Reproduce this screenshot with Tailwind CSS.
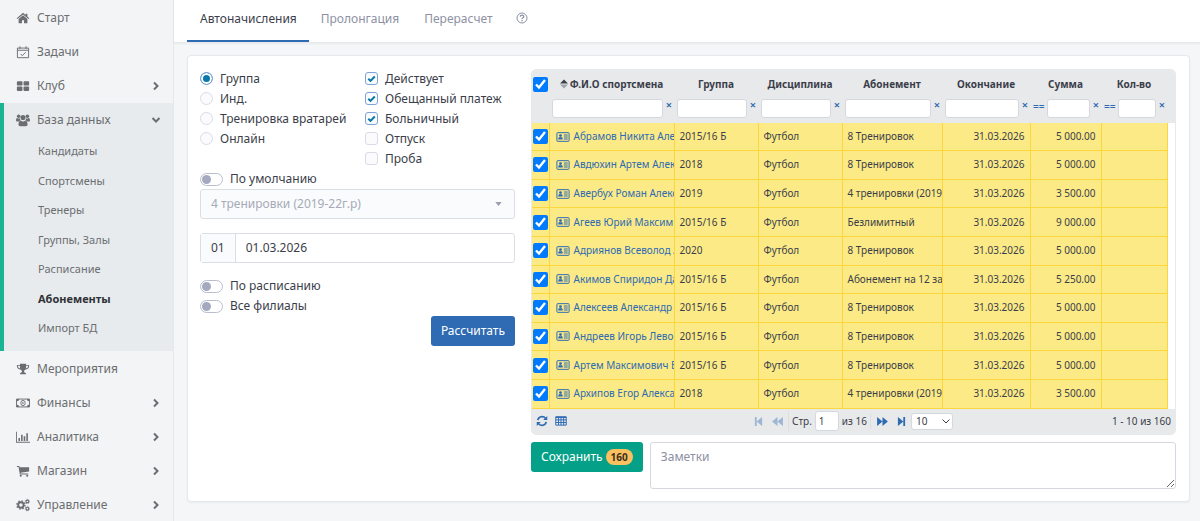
<!DOCTYPE html>
<html lang="ru">
<head>
  <meta charset="UTF-8" />
  <meta name="viewport" content="width=device-width, initial-scale=1.0" />
  <title>Абонементы — Автоначисления</title>
  <script src="https://cdn.jsdelivr.net/npm/@tailwindcss/browser@4"></script>
</head>
<body class="flex min-h-screen bg-[#f5f6f8] font-['Noto_Sans','Open_Sans',sans-serif] text-[12px] text-[#3b3e4a]">

  <!-- Иконки -->
  <svg class="hidden">
    <symbol id="i-home" viewBox="0 0 16 16"><path d="M8 2 .8 8.2l.9 1L8 3.900l6.300 5.300.9-1L13 6.200V3h-2v1.500z"/><path d="M8 4.900 3 9.100V14h3.800v-3.500h2.400V14H13V9.100z"/></symbol>
    <symbol id="i-task" viewBox="0 0 16 16"><path fill="none" stroke="currentColor" stroke-width="1.100" d="M1.600 3.500h12.800v11H1.600zM1.600 6h12.800M4.500 1.500v3M11.500 1.500v3M5.200 10.200l2 2 3.800-3.900"/></symbol>
    <symbol id="i-grid" viewBox="0 0 16 16"><rect x="1" y="2.500" width="6.400" height="5" rx="1"/><rect x="8.600" y="2.500" width="6.400" height="5" rx="1"/><rect x="1" y="8.700" width="6.400" height="5" rx="1"/><rect x="8.600" y="8.700" width="6.400" height="5" rx="1"/></symbol>
    <symbol id="i-users" viewBox="0 0 16 16"><circle cx="3" cy="3.600" r="2"/><circle cx="13" cy="3.600" r="2"/><circle cx="8" cy="5.200" r="2.900"/><path d="M0 8.500C0 6.500.6 5.600 1.500 5.600c1 .7 2 .7 2.900.3 0 1.200.4 2 1 2.700-1 .1-1.700.5-2.200 1.200H1.400C.5 9.800 0 9.400 0 8.500zM16 8.500c0-2-.6-2.900-1.500-2.900-1 .7-2 .7-2.900.3 0 1.200-.4 2-1 2.700 1 .1 1.700.5 2.200 1.200h1.800c.9 0 1.400-.4 1.400-1.300zM2.800 13.200c0-2.700.9-4.300 2.600-4.300 1.600 1.200 3.600 1.200 5.200 0 1.700 0 2.600 1.600 2.600 4.300 0 1.200-.8 1.800-1.900 1.800H4.700c-1.100 0-1.900-.6-1.900-1.800z"/></symbol>
    <symbol id="i-cup" viewBox="0 0 16 16"><path fill-rule="evenodd" d="M4.500 2h7v1.300H15v1.500c0 2-1.800 3.500-4.200 3.800-.5.700-1.600 1.200-1.600 2.200 0 .8.500 1.200 1.400 1.400.6.200.9.600.9 1.300v.5h-7v-.5c0-.7.3-1.100.9-1.300.9-.2 1.400-.6 1.400-1.400 0-1-1.100-1.500-1.600-2.200C2.800 8.300 1 6.800 1 4.800V3.300h3.500zM2 4.300c0 1.500 1 2.600 2.800 3.100-.3-.9-.4-2-.4-3.100zm12 0h-2.400c0 1.100-.1 2.200-.4 3.100C13 6.900 14 5.800 14 4.300z"/></symbol>
    <symbol id="i-money" viewBox="0 0 16 16"><path fill="none" stroke="currentColor" stroke-width="1.100" d="M.6 3.500h14.800v9H.6z"/><path d="M1 3.500h2.600A2.500 2.500 0 0 1 1 6zM15 3.500h-2.600A2.500 2.500 0 0 0 15 6zM1 12.500h2.600A2.500 2.500 0 0 0 1 10zM15 12.500h-2.600A2.500 2.500 0 0 1 15 10z"/><ellipse cx="8" cy="8" rx="2.500" ry="3.100" fill="none" stroke="currentColor"/><path d="M7.300 6.500h1.200v3h-1.200z"/></symbol>
    <symbol id="i-chart" viewBox="0 0 16 16"><path d="M0 2h1v11.500h15v1H0zM2.800 9h1.800v3.700H2.800zM5.800 5.500h1.800v7.200H5.800zM8.800 7.200h1.800v5.500H8.800zM11.800 3.600h1.800v9.100h-1.800z"/></symbol>
    <symbol id="i-cart" viewBox="0 0 16 16"><path d="M1 2.300h2.800l.3 1.300H15v5L5.200 9.900l.2.900H14v1.200H4.400L2.900 3.500H1z"/><circle cx="5.400" cy="13.500" r="1.200"/><circle cx="12.800" cy="13.500" r="1.200"/></symbol>
    <symbol id="i-cogs" viewBox="0 0 16 16"><circle cx="5.600" cy="8" r="3.100" fill="none" stroke="currentColor" stroke-width="2.200"/><circle cx="5.600" cy="8" r="4.700" fill="none" stroke="currentColor" stroke-width="1.500" stroke-dasharray="1.850 1.850"/><circle cx="13" cy="4" r="1.600" fill="none" stroke="currentColor" stroke-width="1.300"/><circle cx="13" cy="4" r="2.500" fill="none" stroke="currentColor" stroke-width=".8" stroke-dasharray="1 1"/><circle cx="13" cy="12.200" r="1.600" fill="none" stroke="currentColor" stroke-width="1.300"/><circle cx="13" cy="12.200" r="2.500" fill="none" stroke="currentColor" stroke-width=".8" stroke-dasharray="1 1"/></symbol>
    <symbol id="i-right" viewBox="0 0 10 10"><path fill="none" stroke="currentColor" stroke-width="2" d="m3 1.500 3.500 3.500L3 8.500"/></symbol>
    <symbol id="i-down" viewBox="0 0 10 10"><path fill="none" stroke="currentColor" stroke-width="2" d="M1.500 3 5 6.500 8.500 3"/></symbol>
    <symbol id="i-card" viewBox="0 0 16 12"><path fill="none" stroke="currentColor" stroke-width="1.200" d="M1.600.8h12.800q.9 0 .9.900v8.600q0 .9-.9.900H1.600q-.9 0-.9-.9V1.700q0-.9.900-.9z"/><circle cx="5" cy="4.300" r="1.700"/><path d="M2.300 8.900c0-2 .6-3 1.500-3 .8.500 1.600.5 2.400 0 .9 0 1.500 1 1.500 3zM9 3h4.700v1.100H9zM9 5.400h4.700v1.100H9zM9 7.800h4.700v1.100H9z"/></symbol>
    <symbol id="i-refresh" viewBox="0 0 16 16"><path fill="none" stroke="currentColor" stroke-width="2.200" d="M2.300 6.800A5.900 5.900 0 0 1 12.800 4.500M13.700 9.200A5.900 5.900 0 0 1 3.200 11.500"/><path d="M15 1.300v5.400H9.600zM1 14.700V9.300h5.400z"/></symbol>
    <symbol id="i-table" viewBox="0 0 16 16"><path fill="none" stroke="currentColor" stroke-width="1.300" d="M1 2.500h14v11H1zM1 6.500h14M1 10h14M4.700 3v10.500M8 3v10.500M11.500 3v10.500"/><path d="M1 2h14v2H1z"/></symbol>
    <symbol id="i-last" viewBox="0 0 10 10"><path d="M1 0l6 5-6 5zM7 0h2v10H7z"/></symbol>
    <symbol id="i-next" viewBox="0 0 12 10"><path d="M0 0l6 5-6 5zM6 0l6 5-6 5z"/></symbol>
  </svg>

  <!-- Боковое меню -->
  <nav class="w-[174px] shrink-0 border-r border-[#e6e8ec] bg-[#f3f4f6] pt-px text-[12px] text-[#6b6e70]">
    <a href="#" class="flex h-[34px] items-center gap-[7px] pr-3 pl-4"><svg class="size-[14px] fill-current"><use href="#i-home" /></svg>Старт</a>
    <a href="#" class="flex h-[34px] items-center gap-[7px] pr-3 pl-4"><svg class="size-[14px] fill-current"><use href="#i-task" /></svg>Задачи</a>
    <a href="#" class="flex h-[34px] items-center gap-[7px] pr-3 pl-4"><svg class="size-[14px] fill-current"><use href="#i-grid" /></svg>Клуб<svg class="ml-auto size-[10px]"><use href="#i-right" /></svg></a>

    <div class="mb-px border-l-4 border-[#1ab394] bg-[#e8ebee] pb-2">
      <a href="#" class="flex h-[34px] items-center gap-[7px] pr-3 pl-3"><svg class="size-[14px] fill-current"><use href="#i-users" /></svg>База данных<svg class="ml-auto size-[10px]"><use href="#i-down" /></svg></a>
      <div class="grid h-[206px] items-center pl-[34px] text-[11px]">
        <a href="#">Кандидаты</a>
        <a href="#">Спортсмены</a>
        <a href="#">Тренеры</a>
        <a href="#">Группы, Залы</a>
        <a href="#">Расписание</a>
        <a href="#" class="font-bold text-[#2f3236]">Абонементы</a>
        <a href="#">Импорт БД</a>
      </div>
    </div>

    <a href="#" class="flex h-[34px] items-center gap-[7px] pr-3 pl-4"><svg class="size-[14px] fill-current"><use href="#i-cup" /></svg>Мероприятия</a>
    <a href="#" class="flex h-[34px] items-center gap-[7px] pr-3 pl-4"><svg class="size-[14px] fill-current"><use href="#i-money" /></svg>Финансы<svg class="ml-auto size-[10px]"><use href="#i-right" /></svg></a>
    <a href="#" class="flex h-[34px] items-center gap-[7px] pr-3 pl-4"><svg class="size-[14px] fill-current"><use href="#i-chart" /></svg>Аналитика<svg class="ml-auto size-[10px]"><use href="#i-right" /></svg></a>
    <a href="#" class="flex h-[34px] items-center gap-[7px] pr-3 pl-4"><svg class="size-[14px] fill-current"><use href="#i-cart" /></svg>Магазин<svg class="ml-auto size-[10px]"><use href="#i-right" /></svg></a>
    <a href="#" class="flex h-[34px] items-center gap-[7px] pr-3 pl-4"><svg class="size-[14px] fill-current"><use href="#i-cogs" /></svg>Управление<svg class="ml-auto size-[10px]"><use href="#i-right" /></svg></a>
  </nav>

  <main class="min-w-0 flex-1">
    <!-- Вкладки -->
    <div class="flex border-b border-[#e6e8ec] bg-white pl-[13px] text-[12px] text-[#8d91a3] shadow-xs">
      <a href="#" class="border-b-2 border-[#2f6bb3] px-3 pt-[9px] pb-[11px] pl-[13px] leading-5 text-[#3b3e4a]">Автоначисления</a>
      <a href="#" class="px-3 pt-[9px] pb-[11px] leading-5">Пролонгация</a>
      <a href="#" class="px-[13px] pt-[9px] pb-[11px] leading-5">Перерасчет</a>
      <a href="#" class="px-[10px] pt-[9px] pb-[11px] leading-5" aria-label="Справка">
        <svg viewBox="0 0 12 12" class="mt-[3px] size-3" fill="none" stroke="currentColor"><circle cx="6" cy="6" r="5" /><path stroke-width="1.3" d="M4.300 4.800c0-2.200 3.500-2.100 3.500-.2C7.800 5.800 6 5.800 6 7.100M6 8v1.200" /></svg>
      </a>
    </div>

    <div class="mt-3 mr-[10px] ml-[13px] grid grid-cols-[315px_1fr] gap-4 rounded border border-[#e6e8ec] bg-white p-3 pr-[13px] shadow-xs">

      <!-- Параметры расчета -->
      <form class="pt-px text-[12px] leading-5">
        <div class="grid grid-cols-[149px_1fr] gap-x-4">
          <div id="types"></div>
          <div id="statuses"></div>
        </div>

        <label class="flex items-center gap-[7px]">
          <input type="checkbox" class="sr-only" />
          <span class="flex h-[13px] w-[23px] rounded-full border border-[#b9bdd0] p-px"><span class="size-[9px] rounded-full bg-[#a5a9c0]"></span></span>
          По умолчанию
        </label>

        <div class="grid items-center">
          <select disabled aria-label="Абонемент" class="col-start-1 row-start-1 h-[30px] appearance-none rounded-[3px] border border-[#dcdee6] bg-[#fafbfc] px-[10px] text-[#a6aab8]">
            <option>4 тренировки (2019-22г.р)</option>
          </select>
          <svg viewBox="0 0 8 5" class="col-start-1 row-start-1 mr-[13px] h-1 w-[7px] justify-self-end fill-[#9a9eb0]"><path d="M0 0h8L4 5z" /></svg>
        </div>

        <div class="mt-[14px] flex h-[30px] rounded-[3px] border border-[#dcdee6]">
          <label for="date" class="flex items-center border-r border-[#dcdee6] bg-[#fafbfc] px-[10px]">01</label>
          <input id="date" value="01.03.2026" class="min-w-0 flex-1 px-[10px]" />
        </div>

        <label class="mt-[13px] flex items-center gap-[7px]">
          <input type="checkbox" class="sr-only" />
          <span class="flex h-[13px] w-[23px] rounded-full border border-[#b9bdd0] p-px"><span class="size-[9px] rounded-full bg-[#a5a9c0]"></span></span>
          По расписанию
        </label>
        <label class="flex items-center gap-[7px]">
          <input type="checkbox" class="sr-only" />
          <span class="flex h-[13px] w-[23px] rounded-full border border-[#b9bdd0] p-px"><span class="size-[9px] rounded-full bg-[#a5a9c0]"></span></span>
          Все филиалы
        </label>
        <button type="button" class="ml-auto block h-[30px] rounded-[3px] bg-[#2f6bb3] px-[10px] text-white">Рассчитать</button>
      </form>

      <div class="min-w-0">
        <!-- Таблица -->
        <div class="mt-px overflow-hidden rounded-[5px] border border-[#e7e9ea]">
          <table class="w-full table-fixed border-collapse text-[10px]">
            <colgroup>
              <col class="w-[17px]" />
              <col class="w-[125px]" />
              <col class="w-[84px]" />
              <col class="w-[84px]" />
              <col class="w-[100px]" />
              <col class="w-[88px]" />
              <col class="w-[71px]" />
              <col class="w-[66px]" />
              <col class="w-[8px]" />
            </colgroup>
            <thead class="bg-[#e7e9ea]">
              <tr class="h-7">
                <th><input type="checkbox" checked aria-label="Выбрать все" class="ml-px block size-[15px] accent-[#007bff]" /></th>
                <th>
                  <span class="flex items-center justify-center gap-[2px]">
                    <svg viewBox="0 0 8 10" class="h-[10px] w-2"><path fill="#3b3e4a" d="M0 4.500 4 .5l4 4z" /><path fill="#a0a3aa" d="M0 5.500h8l-4 4z" /></svg>Ф.И.О спортсмена
                  </span>
                </th>
                <th>Группа</th>
                <th>Дисциплина</th>
                <th>Абонемент</th>
                <th>Окончание</th>
                <th>Сумма</th>
                <th>Кол-во</th>
                <th></th>
              </tr>
              <tr id="filters" class="h-[25px] align-top text-[#2f6bb3]"></tr>
            </thead>
            <tbody id="rows" class="h-[285px]"></tbody>
          </table>

          <!-- Постраничная навигация -->
          <div class="grid h-[25px] grid-cols-[1fr_auto_1fr] items-center bg-[#e7e9ea] px-1 text-[10px]">
            <div class="flex gap-[7px] text-[#2f6bb3]">
              <button aria-label="Обновить"><svg class="block size-3 fill-current"><use href="#i-refresh" /></svg></button>
              <button aria-label="Столбцы"><svg class="block size-3 fill-current"><use href="#i-table" /></svg></button>
            </div>
            <div class="flex items-center text-[#2f6bb3]">
              <button aria-label="Первая" class="opacity-40"><svg class="size-[9px] rotate-180 fill-current"><use href="#i-last" /></svg></button>
              <button aria-label="Назад" class="ml-[9px] opacity-40"><svg class="h-[9px] w-[11px] rotate-180 fill-current"><use href="#i-next" /></svg></button>
              <label class="ml-[5px] flex items-center gap-[3px] border-l border-[#dcdee0] pl-[3px] text-[#3b3e4a]">Стр.<input value="1" class="h-5 w-6 rounded-[3px] border border-[#d5d8df] bg-white px-[3px]" /></label>
              <span class="ml-[3px] border-r border-[#dcdee0] pr-[3px] text-[#3b3e4a]">из 16</span>
              <button aria-label="Вперед" class="ml-[6px]"><svg class="h-[9px] w-[11px] fill-current"><use href="#i-next" /></svg></button>
              <button aria-label="Последняя" class="ml-[9px]"><svg class="size-[9px] fill-current"><use href="#i-last" /></svg></button>
              <span class="ml-[5px] grid items-center text-[#3b3e4a]">
                <select aria-label="Строк на странице" class="col-start-1 row-start-1 h-[17px] w-[42px] appearance-none rounded-[3px] border border-[#d5d8df] bg-white pl-1"><option>10</option></select>
                <svg viewBox="0 0 8 5" class="col-start-1 row-start-1 mr-[3px] h-[5px] w-2 justify-self-end" fill="none" stroke="currentColor"><path d="M.5.500 4 4 7.500.5" /></svg>
              </span>
            </div>
            <div class="text-right">1 - 10 из 160</div>
          </div>
        </div>

        <div class="mt-[7px] flex items-start gap-[7px]">
          <button class="flex h-[30px] items-center gap-[3px] rounded-[3px] bg-[#05a088] px-[10px] text-[12px] text-white">Сохранить<span class="rounded-full bg-[#fbc161] px-[5px] text-[10px] leading-4 font-bold text-[#3b3020]">160</span></button>
          <textarea placeholder="Заметки" aria-label="Заметки" class="h-[47px] flex-1 rounded-[3px] border border-[#d5d8e0] px-[10px] py-1 text-[12px] leading-5 placeholder:text-[#8d91a3]"></textarea>
        </div>
      </div>
    </div>
  </main>

  <script>
    const types = ['Группа', 'Инд.', 'Тренировка вратарей', 'Онлайн'];
    const statuses = ['Действует', 'Обещанный платеж', 'Больничный', 'Отпуск', 'Проба'];

    // имя, группа, абонемент, сумма
    const sportsmen = [
      ['Абрамов Никита Але', '2015/16 Б', '8 Тренировок', '5 000.00'],
      ['Авдюхин Артем Алек', '2018', '8 Тренировок', '5 000.00'],
      ['Авербух Роман Алекс', '2019', '4 тренировки (2019', '3 500.00'],
      ['Агеев Юрий Максим', '2015/16 Б', 'Безлимитный', '9 000.00'],
      ['Адриянов Всеволод А', '2020', '8 Тренировок', '5 000.00'],
      ['Акимов Спиридон Да', '2015/16 Б', 'Абонемент на 12 за', '5 250.00'],
      ['Алексеев Александр', '2015/16 Б', '8 Тренировок', '5 000.00'],
      ['Андреев Игорь Лево', '2015/16 Б', '8 Тренировок', '5 000.00'],
      ['Артем Максимович В', '2015/16 Б', '8 Тренировок', '5 000.00'],
      ['Архипов Егор Алекса', '2018', '4 тренировки (2019', '3 500.00'],
    ];

    document.getElementById('types').innerHTML = types.map((name, i) => `
      <label class="flex items-center gap-[7px] whitespace-nowrap">
        <input type="radio" name="type" ${i === 0 ? 'checked' : ''} class="mb-[2px] size-[13px] appearance-none rounded-full border border-[#d9dbe6] bg-[#fbfbfd] checked:border-[#7ba3dc] checked:bg-[#0a78a8] checked:shadow-[inset_0_0_0_2px_white]" />
        ${name}
      </label>
    `).join('');

    document.getElementById('statuses').innerHTML = statuses.map((name, i) => `
      <label class="flex items-center gap-[7px] whitespace-nowrap">
        <span class="mb-[2px] grid">
          <input type="checkbox" ${i < 3 ? 'checked' : ''} class="peer col-start-1 row-start-1 size-[13px] appearance-none rounded-[3px] border border-[#d9dbe6] bg-[#fbfbfd] checked:border-[#7ba3dc]" />
          <svg viewBox="0 0 13 13" class="invisible col-start-1 row-start-1 size-[13px] peer-checked:visible"><path fill="none" stroke="#0a78a8" stroke-width="2" d="m3.300 6.700 2.200 2.200 4.300-4.400" /></svg>
        </span>
        ${name}
      </label>
    `).join('');

    const columns = ['Ф.И.О', 'Группа', 'Дисциплина', 'Абонемент', 'Окончание', 'Сумма', 'Кол-во'];
    document.getElementById('filters').innerHTML = '<td></td>' + columns.map((name, i) => `
      <td class="pt-px">
        <div class="flex items-start gap-[3px] pr-[2px] pl-[3px] leading-[14px] font-semibold">
          ${i > 4 ? '<span>==</span>' : ''}
          <input aria-label="Фильтр: ${name}" class="h-[19px] w-0 min-w-0 flex-1 rounded-[3px] border border-[#d5d8df] bg-white" />
          <button aria-label="Сбросить" class="text-[11px] leading-3">×</button>
        </div>
      </td>
    `).join('') + '<td></td>';

    document.getElementById('rows').innerHTML = sportsmen.map(([name, group, plan, sum]) => `
      <tr class="[&>td]:overflow-hidden [&>td]:border-r [&>td]:border-b [&>td]:border-[#fcd63c] [&>td]:bg-[#fbea86] [&>td]:whitespace-nowrap">
        <td><input type="checkbox" checked aria-label="${name}" class="ml-px block size-[15px] accent-[#007bff]" /></td>
        <td class="pl-[6px]"><a href="#" class="flex items-center gap-1 text-[#2f6bb3]"><svg class="h-[10px] w-[14px] shrink-0 fill-current"><use href="#i-card" /></svg>${name}</a></td>
        <td class="pl-[5px]">${group}</td>
        <td class="pl-[5px]">Футбол</td>
        <td class="pl-[5px]">${plan}</td>
        <td class="pr-[5px] text-right">31.03.2026</td>
        <td class="pr-[5px] text-right">${sum}</td>
        <td></td>
      </tr>
    `).join('');
  </script>
</body>
</html>
